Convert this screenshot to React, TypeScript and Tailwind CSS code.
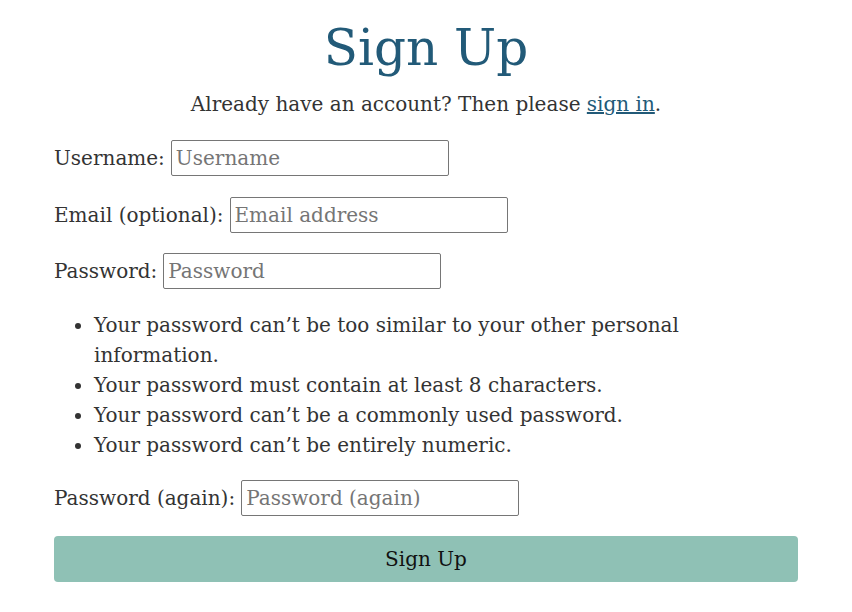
import React from 'react'

const rules = [
  'Your password can’t be too similar to your other personal information.',
  'Your password must contain at least 8 characters.',
  'Your password can’t be a commonly used password.',
  'Your password can’t be entirely numeric.',
]

function Field({ label, placeholder }: { label: string; placeholder: string }) {
  return (
    <p className="flex items-center h-[36px]">
      <label className="mr-[6px]">{label}</label>
      <input
        className="w-[278px] h-[36px] border border-[#767676] rounded-[2px] px-[4px] placeholder:text-[#757575] outline-none"
        placeholder={placeholder}
      />
    </p>
  )
}

export default function App() {
  return (
    <div className="min-h-screen bg-white text-[#333333] font-['DejaVu_Serif',serif] text-[20px] leading-[30px]">
      <div className="w-[744px] mx-auto">
        <h1 className="text-center text-[#225a78] text-[50px] leading-[64px] pt-[16px]">Sign Up</h1>
        <p className="text-center mt-[9px]">
          Already have an account? Then please{' '}
          <a href="#" className="underline text-[#225a78]">
            sign in
          </a>
          .
        </p>
        <form className="mt-[21px] flex flex-col">
          <Field label="Username:" placeholder="Username" />
          <div className="h-[21px]" />
          <Field label="Email (optional):" placeholder="Email address" />
          <div className="h-[20px]" />
          <Field label="Password:" placeholder="Password" />
          <ul className="list-disc pl-[40px] mt-[21px]">
            {rules.map((r) => (
              <li key={r}>{r}</li>
            ))}
          </ul>
          <div className="h-[20px]" />
          <Field label="Password (again):" placeholder="Password (again)" />
          <button
            type="button"
            className="mt-[20px] h-[46px] w-full rounded-[4px] bg-[#8fc1b5] text-[#111111]"
          >
            Sign Up
          </button>
        </form>
      </div>
    </div>
  )
}
